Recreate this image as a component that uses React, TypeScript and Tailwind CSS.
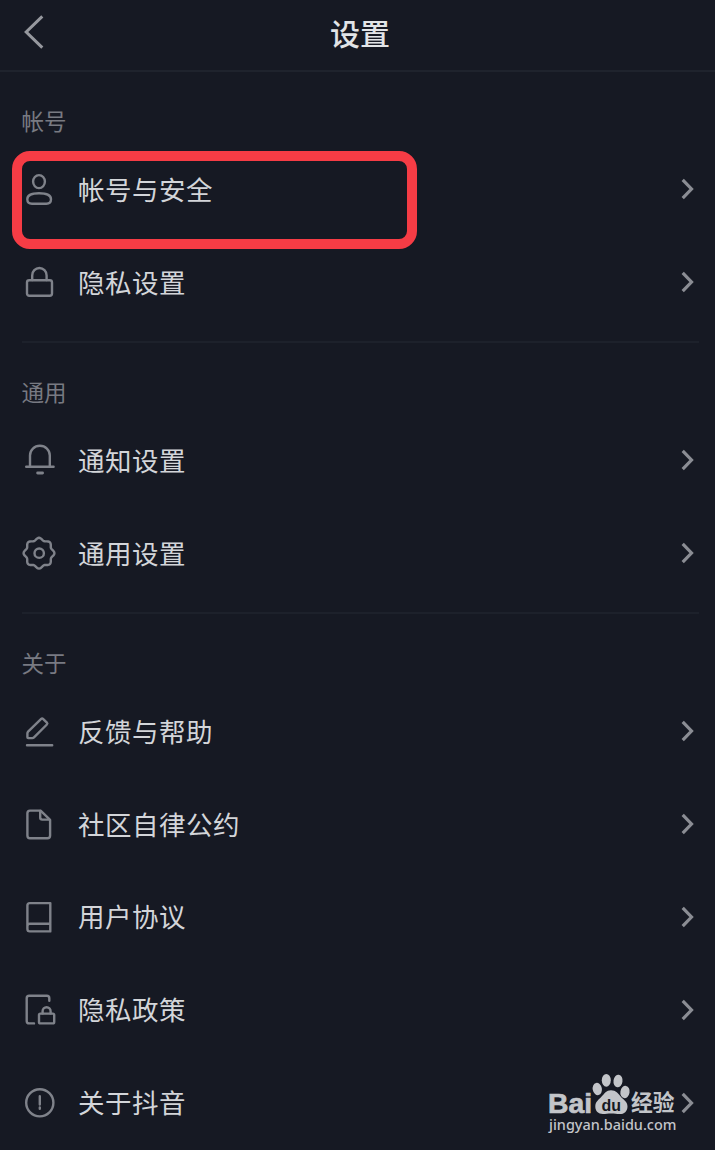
import type { ReactNode } from "react";

const gearPath =
  Array.from({ length: 96 }, (_, i) => {
    const a = (i / 96) * Math.PI * 2;
    const r = 14.2 + 1.2 * Math.cos(8 * a);
    return `${i ? "L" : "M"}${(18 + r * Math.sin(a)).toFixed(2)} ${(18.2 - r * Math.cos(a)).toFixed(2)}`;
  }).join("") + "Z";

const icons: Record<string, ReactNode> = {
  user: (
    <>
      <ellipse cx="18" cy="10.6" rx="5.9" ry="6.5" />
      <path d="M18 22.3c7 0 12 1.9 12 6 0 3-1.5 4.4-4.6 4.4H10.9c-3.1 0-4.6-1.4-4.6-4.4 0-4.1 4.9-6 11.7-6Z" />
    </>
  ),
  lock: (
    <>
      <rect x="6" y="16.2" width="25" height="15.6" rx="2.2" />
      <path d="M11.2 16v-4.6a7.2 7.4 0 0 1 14.4 0V16" />
    </>
  ),
  bell: (
    <>
      <path d="M5.2 24.7h27.4M9 24.5V13.4a9.9 9.6 0 0 1 19.8 0v11.1" />
      <path d="M16.6 31h5" strokeWidth="2.8" />
    </>
  ),
  gear: (
    <>
      <path d={gearPath} />
      <circle cx="18.2" cy="18.2" r="4.7" />
    </>
  ),
  pencil: (
    <path d="M6 32.2h25.2M20.2 5.8c.6-.6 1.2-.6 1.8 0l3.9 3.9c.6.6.6 1.2 0 1.8L13 24.4c-.5.5-1 .7-1.7.7H7.2c-.5 0-.8-.3-.8-.8v-3.9c0-.7.2-1.3.7-1.8Z" />
  ),
  doc: (
    <>
      <path d="M9 4.6h10.6l9.5 9.3v15.6c0 1.8-.9 2.7-2.7 2.7H9c-1.8 0-2.6-.9-2.6-2.7V7.3c0-1.8.8-2.7 2.6-2.7Z" />
      <path d="M19.2 5v6.6c0 1.3.7 2 2 2h7" />
    </>
  ),
  book: (
    <path d="M8.8 4.1h20.5v28.3H8.8c-1.5 0-2.4-.9-2.4-2.4V6.5c0-1.5.9-2.4 2.4-2.4ZM6.4 27.2c0-1.6.9-2.5 2.4-2.5h20.5" />
  ),
  policy: (
    <>
      <path d="M13 31.4H8.2c-1.7 0-2.5-.8-2.5-2.5V6.2c0-1.7.8-2.5 2.5-2.5h17.6c1.7 0 2.5.8 2.5 2.5v2.6" />
      <rect x="18" y="21.6" width="15.2" height="9.8" rx="1.4" />
      <path d="M21.6 21.4v-2.2a4 4 0 0 1 8 0v2.2" />
    </>
  ),
  info: (
    <>
      <circle cx="18.8" cy="17.8" r="13.6" />
      <path d="M18.8 11.3v8.2M18.8 22.4v1.4" />
    </>
  ),
};

const sections = [
  {
    title: "帐号",
    rows: [
      { icon: "user", label: "帐号与安全" },
      { icon: "lock", label: "隐私设置" },
    ],
  },
  {
    title: "通用",
    rows: [
      { icon: "bell", label: "通知设置" },
      { icon: "gear", label: "通用设置" },
    ],
  },
  {
    title: "关于",
    rows: [
      { icon: "pencil", label: "反馈与帮助" },
      { icon: "doc", label: "社区自律公约" },
      { icon: "book", label: "用户协议" },
      { icon: "policy", label: "隐私政策" },
      { icon: "info", label: "关于抖音" },
    ],
  },
];

function Row({ icon, label }: { icon: string; label: string }) {
  return (
    <li className="flex h-[92.8px] items-center">
      <svg
        className="size-9 shrink-0 stroke-[#7f828a]"
        viewBox="0 0 36 36"
        fill="none"
        strokeWidth="2.4"
        strokeLinecap="round"
        strokeLinejoin="round"
      >
        {icons[icon]}
      </svg>
      <span className="ml-[21px] flex-1 pb-px text-[26.5px] leading-9 tracking-[0.5px] text-[#d3d5d9]">{label}</span>
      <svg className="h-6 w-4 shrink-0 stroke-[#8b8d94]" viewBox="0 0 16 24" fill="none" strokeWidth="3.2">
        <path d="M2.7 2.9 11.5 12 2.7 21.1" />
      </svg>
    </li>
  );
}

function Watermark() {
  return (
    <svg className="absolute top-[1070px] left-[545px] h-[70px] w-[135px]" viewBox="545 1070 135 70" fill="#c3c5c9">
      <text
        x="548"
        y="1112.6"
        fontSize="28"
        fontWeight="700"
        textLength="44"
        lengthAdjust="spacingAndGlyphs"
        stroke="#c3c5c9"
        strokeWidth="0.7"
        className="font-['Liberation_Sans',sans-serif]"
      >
        Bai
      </text>
      <ellipse cx="597.3" cy="1089" rx="4.6" ry="6.2" transform="rotate(-12 597.3 1089)" />
      <ellipse cx="606.3" cy="1080.3" rx="4.5" ry="6.4" />
      <ellipse cx="618" cy="1081" rx="4.5" ry="6.4" transform="rotate(8 618 1081)" />
      <ellipse cx="625" cy="1092" rx="4.6" ry="6.2" transform="rotate(10 625 1092)" />
      <path d="M611 1090.2c5 0 7.200 3.200 9.600 6.200 2.800 3.400 6.900 5.100 6.900 10 0 4.800-3.500 7.700-7.700 7.700-3.100 0-5.400-.5-8.700-.5s-5.200.5-8.200.5c-4.600 0-7.600-2.900-7.600-7.500 0-4.800 3.400-6.800 6.300-10 2.700-3 4.800-6.400 9.400-6.400Z" />
      <text
        x="601.6"
        y="1110.8"
        fontSize="16"
        fontWeight="700"
        fill="#161923"
        textLength="19.5"
        lengthAdjust="spacingAndGlyphs"
        className="font-['Liberation_Sans',sans-serif]"
      >
        du
      </text>
      <text
        x="631"
        y="1111.3"
        fontSize="22.5"
        fontWeight="700"
        textLength="43.5"
        lengthAdjust="spacingAndGlyphs"
        className="font-['Noto_Sans_CJK_SC',sans-serif]"
      >
        经验
      </text>
      <text
        x="549"
        y="1130.3"
        fontSize="14.5"
        fontWeight="500"
        textLength="127.5"
        lengthAdjust="spacingAndGlyphs"
        className="font-['Noto_Sans',sans-serif]"
      >
        jingyan.baidu.com
      </text>
    </svg>
  );
}

export default function App() {
  return (
    <div className="relative h-[1150px] w-[715px] overflow-hidden bg-[#161923] font-['Noto_Sans_CJK_SC',sans-serif]">
      <header className="flex h-[70px] items-start pt-3">
        <svg className="ml-5 h-10 w-7 shrink-0 stroke-[#96989e]" viewBox="0 0 28 40" fill="none" strokeWidth="3">
          <path d="M22.3 4.4 6.2 20 22.3 35.6" />
        </svg>
        <h1 className="-mt-px flex-1 pr-[43px] text-center text-[30px] leading-[42px] font-medium text-[#e2e4e7]">
          设置
        </h1>
      </header>
      <main>
        {sections.map((s, i) => (
          <section key={s.title} className={i < 2 ? "h-[271px]" : ""}>
            <div className={i === 0 ? "h-0.5 bg-[#1f232d]" : "mr-4 ml-[22px] h-0.5 bg-[#1d212b]"} />
            <h2 className="flex h-[71px] items-center pt-[25px] pl-[21.5px] text-[22.5px] leading-8 text-[#787a82]">
              {s.title}
            </h2>
            <ul className="pr-[19px] pl-[21px]">
              {s.rows.map((r) => (
                <Row key={r.label} {...r} />
              ))}
            </ul>
          </section>
        ))}
      </main>
      <div className="absolute top-[151px] left-3 h-[98px] w-[405px] rounded-[18px] border-10 border-[#f63c45]" />
      <Watermark />
    </div>
  );
}
